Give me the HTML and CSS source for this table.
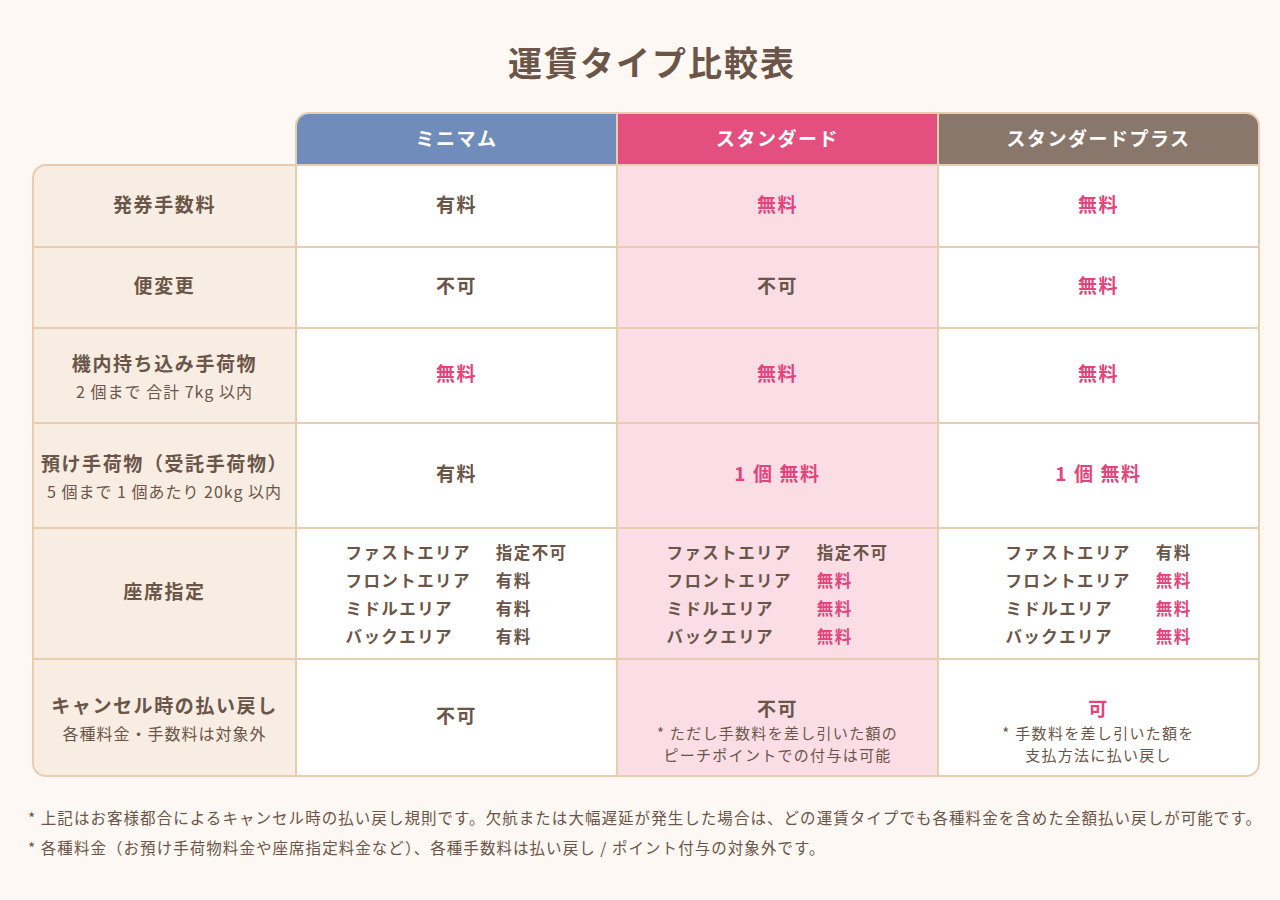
FILE: index.html
```html
<!DOCTYPE html>
<html lang="ja">
<head>
<meta charset="utf-8">
<title>運賃タイプ比較表</title>
<link rel="stylesheet" href="styles.css">
</head>
<body>
<main class="page">
  <h1 class="title">運賃タイプ比較表</h1>

  <div class="head">
    <div class="hcell h-min">ミニマム</div>
    <div class="hcell h-std">スタンダード</div>
    <div class="hcell h-plus">スタンダードプラス</div>
  </div>

  <div class="grid">
    <div class="cell one label c-tl"><span class="main">発券手数料</span></div>
    <div class="cell one"><span class="main">有料</span></div>
    <div class="cell one std"><span class="main pink">無料</span></div>
    <div class="cell one"><span class="main pink">無料</span></div>

    <div class="cell one label"><span class="main">便変更</span></div>
    <div class="cell one"><span class="main">不可</span></div>
    <div class="cell one std"><span class="main">不可</span></div>
    <div class="cell one"><span class="main pink">無料</span></div>

    <div class="cell label"><span class="main">機内持ち込み手荷物</span><span class="sub">2 個まで 合計 7kg 以内</span></div>
    <div class="cell one"><span class="main pink">無料</span></div>
    <div class="cell one std"><span class="main pink">無料</span></div>
    <div class="cell one"><span class="main pink">無料</span></div>

    <div class="cell label"><span class="main">預け手荷物（受託手荷物）</span><span class="sub">5 個まで 1 個あたり 20kg 以内</span></div>
    <div class="cell one"><span class="main">有料</span></div>
    <div class="cell one std"><span class="main pink">1 個 無料</span></div>
    <div class="cell one"><span class="main pink">1 個 無料</span></div>

    <div class="cell one label"><span class="main">座席指定</span></div>
    <div class="cell">
      <div class="seats">
        <span>ファストエリア</span><span>指定不可</span>
        <span>フロントエリア</span><span>有料</span>
        <span>ミドルエリア</span><span>有料</span>
        <span>バックエリア</span><span>有料</span>
      </div>
    </div>
    <div class="cell std">
      <div class="seats">
        <span>ファストエリア</span><span>指定不可</span>
        <span>フロントエリア</span><span class="pink">無料</span>
        <span>ミドルエリア</span><span class="pink">無料</span>
        <span>バックエリア</span><span class="pink">無料</span>
      </div>
    </div>
    <div class="cell">
      <div class="seats">
        <span>ファストエリア</span><span>有料</span>
        <span>フロントエリア</span><span class="pink">無料</span>
        <span>ミドルエリア</span><span class="pink">無料</span>
        <span>バックエリア</span><span class="pink">無料</span>
      </div>
    </div>

    <div class="cell label c-bl"><span class="main">キャンセル時の払い戻し</span><span class="sub">各種料金・手数料は対象外</span></div>
    <div class="cell one"><span class="main">不可</span></div>
    <div class="cell std note-cell"><span class="main">不可</span><span class="note">* ただし手数料を差し引いた額の<br>ピーチポイントでの付与は可能</span></div>
    <div class="cell note-cell c-br"><span class="main pink">可</span><span class="note">* 手数料を差し引いた額を<br>支払方法に払い戻し</span></div>
  </div>

  <div class="notes">
    <p>* 上記はお客様都合によるキャンセル時の払い戻し規則です。欠航または大幅遅延が発生した場合は、どの運賃タイプでも各種料金を含めた全額払い戻しが可能です。</p>
    <p>* 各種料金（お預け手荷物料金や座席指定料金など）、各種手数料は払い戻し / ポイント付与の対象外です。</p>
  </div>
</main>
</body>
</html>
```

FILE: styles.css
```css
* { box-sizing: border-box; }

html, body {
  margin: 0;
  padding: 0;
  background: #fdf8f3;
}

body {
  font-family: "Noto Sans CJK JP", "Noto Sans", sans-serif;
  color: #6b5548;
}

.page {
  width: 1280px;
  height: 900px;
  padding-top: 38px;
}

.title {
  margin: 0 0 26px;
  padding-left: 24px;
  text-align: center;
  font-size: 34px;
  line-height: 48px;
  font-weight: 700;
  letter-spacing: 2px;
  color: #6b5548;
}

.head {
  margin-left: 295px;
  width: 965px;
  display: grid;
  grid-template-columns: 319px 319px 319px;
  gap: 2px;
  padding: 2px 2px 0;
  background: #e8cdb0;
  border-radius: 14px 14px 0 0;
}

.hcell {
  height: 50px;
  padding-bottom: 4px;
  display: flex;
  align-items: center;
  justify-content: center;
  color: #fff;
  font-size: 19px;
  font-weight: 700;
  letter-spacing: 1.5px;
}

.h-min { background: #6f8cba; border-top-left-radius: 12px; }
.h-std { background: #e3507f; }
.h-plus { background: #8a776b; border-top-right-radius: 12px; }

.grid {
  margin-left: 32px;
  width: 1228px;
  display: grid;
  grid-template-columns: 261px 319px 319px 319px;
  grid-template-rows: 80px 79px 93px 103px 129px 115px;
  gap: 2px;
  padding: 2px;
  background: #e8cdb0;
  border-radius: 14px 0 14px 14px;
}

.cell {
  background: #fff;
  display: flex;
  flex-direction: column;
  align-items: center;
  justify-content: center;
  text-align: center;
}

.cell.one { padding-bottom: 5px; }

.cell.label { background: #f7ede3; }
.cell.std { background: #fbdde6; }

.c-tl { border-top-left-radius: 12px; }
.c-bl { border-bottom-left-radius: 12px; }
.c-br { border-bottom-right-radius: 12px; }

.main {
  font-size: 19px;
  line-height: 26px;
  font-weight: 700;
  letter-spacing: 1.6px;
}

.sub {
  font-size: 16px;
  line-height: 22px;
  margin-top: 4px;
  letter-spacing: 1px;
}

.pink { color: #e2457c; }

.seats {
  display: grid;
  grid-template-columns: auto auto;
  column-gap: 25px;
  text-align: left;
  font-size: 16.5px;
  line-height: 28px;
  font-weight: 700;
  letter-spacing: 1.4px;
}

.note-cell { padding-top: 25px; }

.note-cell .main { line-height: 28px; }

.note {
  font-size: 15px;
  line-height: 22px;
  letter-spacing: 1.3px;
}

.notes {
  margin-top: 25px;
  padding-left: 28px;
}

.notes p {
  margin: 0;
  font-size: 15.5px;
  line-height: 30px;
  letter-spacing: 1.05px;
  white-space: nowrap;
}
```
